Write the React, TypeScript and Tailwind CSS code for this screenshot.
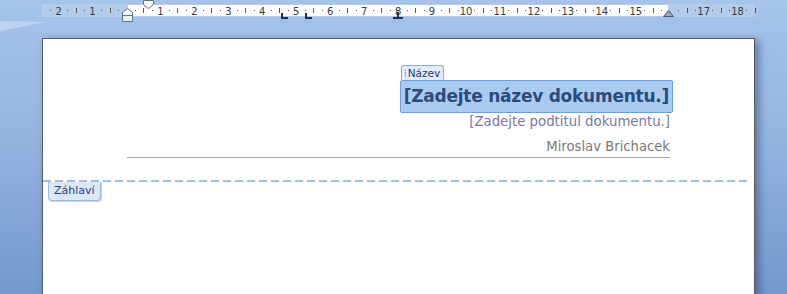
import React from "react";

const ZERO = 84.5;
const CM = 33.95;

function RulerMarks() {
  const items: React.ReactNode[] = [];
  for (let q = -10; q <= 75; q++) {
    const x = ZERO + (q * CM) / 4;
    if (x < 0 || x > 713) continue;
    if (q % 4 === 0) {
      const n = Math.abs(q / 4);
      if (q === 0 || q === 64) continue;
      items.push(
        <text key={q} x={x} y={10.5} textAnchor="middle" fontSize="10" fill="#3a3a3a" fontFamily="'DejaVu Sans', sans-serif">
          {n}
        </text>
      );
    } else if (Math.abs(q) % 2 === 1) {
      items.push(<rect key={q} x={Math.round(x)} y={6} width={1} height={1} fill="#555" />);
    } else {
      items.push(<rect key={q} x={Math.round(x)} y={4} width={1} height={5} fill="#555" />);
    }
  }
  return <>{items}</>;
}

export default function App() {
  return (
    <div className="relative w-[787px] h-[294px] overflow-hidden bg-gradient-to-b from-[#a6c4ea] via-[#93b3df] to-[#7598cc]">
      <svg className="absolute left-0 top-0" width="60" height="40">
        <polygon points="0,21 46,22 0,31" fill="#bed5f1" />
      </svg>
      <div className="flex flex-col">
        {/* ruler */}
        <div className="relative ml-[42px] mt-[4px] w-[713px] h-[13px] flex border border-[#b7cbe6]">
          <div className="w-[85px] h-full bg-[#b3cbed]" />
          <div className="w-[540px] h-full bg-white" />
          <div className="flex-1 h-full bg-[#b3cbed]" />
          <svg className="absolute left-[-1px] top-[-1px] overflow-visible" width="713" height="13">
            <RulerMarks />
            <polygon points="101.5,-3.5 111.5,-3.5 111.5,0.5 106.5,4.5 101.5,0.5" fill="#fff" stroke="#5d7493" strokeWidth="1" />
            <polygon points="80.5,11.5 80.5,8.5 85.5,4.5 90.5,8.5 90.5,11.5" fill="#fff" stroke="#5d7493" strokeWidth="1" />
            <rect x="80.5" y="11.5" width="10" height="6" fill="#e6edf7" stroke="#5d7493" strokeWidth="1" />
            <path d="M240 9 V14 H246" stroke="#1f2f4a" strokeWidth="2" fill="none" />
            <path d="M264 9 V14 H270" stroke="#1f2f4a" strokeWidth="2" fill="none" />
            <path d="M356 8 V13 M351 14 H361" stroke="#1f2f4a" strokeWidth="2" fill="none" />
            <polygon points="621.5,12.5 626.5,6.5 631.5,12.5" fill="#9aa6b8" stroke="#4c5a70" strokeWidth="1" />
          </svg>
        </div>

        {/* page */}
        <div className="ml-[42px] mt-[21px] w-[713px] h-[260px] bg-white border-l border-t border-r border-[#5a5a5a] shadow-[4px_2px_8px_rgba(20,40,80,0.45)] flex flex-col">
          <div className="px-[84px] pt-[26px] flex flex-col items-end">
            <div className="flex flex-col items-start mr-[-3px]">
              <div className="ml-[1px] h-[15px] px-[3px] flex items-center gap-[2px] bg-[#e2ecf8] border border-b-0 border-[#8eb0de] rounded-t-[3px] text-[11px] text-[#1f3584] leading-none" style={{ fontFamily: "Tahoma, 'DejaVu Sans', sans-serif" }}>
                <span className="flex flex-col gap-[1px]">
                  <span className="w-[1px] h-[1px] bg-[#5b7fc0]" />
                  <span className="w-[1px] h-[1px] bg-[#5b7fc0]" />
                  <span className="w-[1px] h-[1px] bg-[#5b7fc0]" />
                  <span className="w-[1px] h-[1px] bg-[#5b7fc0]" />
                </span>
                <span className="text-[10.5px]">Název</span>
              </div>
              <div className="h-[33px] pl-[3px] pr-[3px] flex items-center bg-[#a9cbf0] border border-[#6f9ee0] rounded-[2px]">
                <span className="text-[17px] tracking-[-0.25px] font-bold text-[#2a4c7c] whitespace-nowrap" style={{ fontFamily: "'DejaVu Sans', Verdana, sans-serif" }}>
                  [Zadejte název dokumentu.]
                </span>
              </div>
            </div>
            <div className="mt-[1px] text-[13.3px] leading-[16px] text-[#7878a8] whitespace-nowrap" style={{ fontFamily: "'DejaVu Sans', Verdana, sans-serif" }}>
              [Zadejte podtitul dokumentu.]
            </div>
            <div className="mt-[9px] text-[13.2px] leading-[16px] text-[#7a7a7a] whitespace-nowrap" style={{ fontFamily: "'DejaVu Sans', Verdana, sans-serif" }}>
              Miroslav Brichacek
            </div>
            <div className="mt-[2px] w-full h-[1px] bg-[#a3a3a3]" />
          </div>
          <div className="mt-[22px] mr-[3px] h-[2px] bg-[repeating-linear-gradient(90deg,#9dbee6_0px,#9dbee6_8px,transparent_8px,transparent_12px)]" />
          <div className="ml-[5px] self-start">
            <div className="h-[19px] px-[5px] flex items-center bg-[#dce8f7] border border-t-0 border-[#9cbbe3] rounded-b-[4px] shadow-[1px_1px_0_#c8d2de] text-[11px] text-[#243f8c]" style={{ fontFamily: "Tahoma, 'DejaVu Sans', sans-serif" }}>
              Záhlaví
            </div>
          </div>
        </div>
      </div>
    </div>
  );
}
